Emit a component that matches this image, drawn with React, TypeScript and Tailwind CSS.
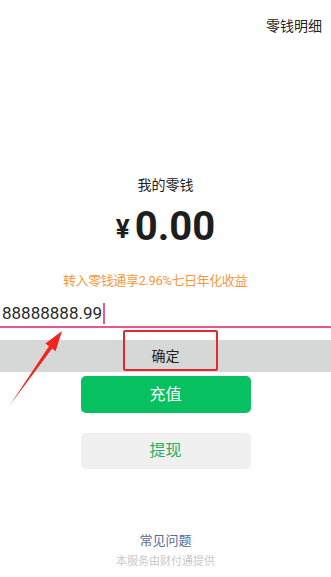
import React from "react";

export default function App() {
  const font = { fontFamily: '"Roboto", "Noto Sans CJK SC", sans-serif' };
  return (
    <div className="relative w-full h-[577px] bg-white overflow-hidden font-['Roboto','Noto_Sans_CJK_SC',sans-serif]" style={font}>
      <div className="flex justify-end pr-[9px] pt-[17px]">
        <span className="text-[14px] leading-[18px] text-[#222]">零钱明细</span>
      </div>

      <div className="mt-[140px] text-center text-[14px] leading-[20px] text-[#222]">我的零钱</div>

      <div className="mt-[8px] flex items-center justify-center h-[48px] text-[#1e1e1e]">
        <span className="text-[26px] font-bold leading-none mr-[5px] mt-[3px]">¥</span>
        <span className="text-[40px] font-bold leading-[48px]">0.00</span>
      </div>

      <div className="mt-[21px] pr-[21px] text-center text-[13px] tracking-[-0.4px] leading-[18px] text-[#f59a3c]">
        转入零钱通享2.96%七日年化收益
      </div>

      <div className="mt-[12px] flex items-center pl-[2px] pb-[2px] border-b-2 border-[#e9588c]">
        <span className="text-[17px] leading-[22px] text-[#2a2a2a]">88888888.99</span>
        <span className="ml-[1px] w-[2px] h-[21px] bg-[#e9588c]" />
      </div>

      <div className="mt-[12px] h-[32px] bg-[#d6d7d7] flex items-center justify-center text-[14px] text-[#222]">
        确定
      </div>

      <div className="mt-[4px] mx-auto w-[170px] h-[37px] rounded-[5px] bg-[#07c160] flex items-center justify-center text-[16px] text-white">
        充值
      </div>

      <div className="mt-[20px] mx-auto w-[170px] h-[36px] rounded-[5px] bg-[#f0f0f0] flex items-center justify-center text-[16px] text-[#2fae63]">
        提现
      </div>

      <div className="mt-[63px] text-center text-[13px] leading-[18px] text-[#576b95]">常见问题</div>
      <div className="mt-[4px] text-center text-[11px] leading-[16px] text-[#c9c9c9]">本服务由财付通提供</div>

      <div className="absolute left-[123px] top-[330px] w-[95px] h-[41px] border-2 border-[#e5282b] rounded-[2px]" />

      <svg className="absolute left-0 top-0" width="331" height="577" viewBox="0 0 331 577">
        <polygon
          points="10,405 52.1,348.5 55.6,351.2 62,331 45.4,343.6 48.9,346.3"
          fill="#f0251f"
        />
      </svg>
    </div>
  );
}
